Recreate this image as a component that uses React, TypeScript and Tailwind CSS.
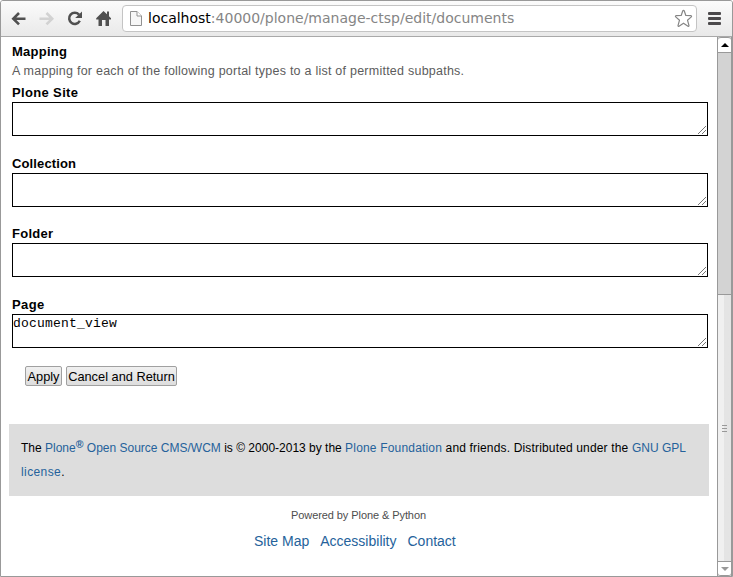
import type { ReactNode } from 'react';

function Field({ label, tracking, value, className }: { label: string; tracking: string; value?: string; className: string }) {
  return (
    <div className={className}>
      <div className={`h-[18px] text-[13px] leading-[18px] font-bold text-black whitespace-nowrap ${tracking}`}>{label}</div>
      <div className="relative h-[34px] w-[696px] border border-black bg-white pt-px">
        <div className="font-['Liberation_Mono','Courier_New',monospace] text-[13px] leading-[15px] tracking-[0.2px] text-black">{value}</div>
        <svg className="absolute right-px bottom-px" width="8" height="8" viewBox="0 0 8 8">
          <path d="M0 8L8 0M4 8L8 4" stroke="#666" strokeWidth="0.9" fill="none" />
        </svg>
      </div>
    </div>
  );
}

function Button({ children, className }: { children: ReactNode; className: string }) {
  return (
    <button className={`h-5 rounded-[2px] border border-[#a0a0a0] bg-linear-to-b from-[#f0f0f0] to-[#dddddd] text-center text-[12.8px] leading-[19px] whitespace-nowrap text-black ${className}`}>
      {children}
    </button>
  );
}

function Link({ children, className = '' }: { children: ReactNode; className?: string }) {
  return <a className={`text-[#25629b] ${className}`}>{children}</a>;
}

function Toolbar() {
  return (
    <div className="flex h-9 shrink-0 items-center border-b border-[#a9a9a9] bg-linear-to-b from-[#fbfbfb] to-[#e9e9e9]">
      <svg width="121" height="35" viewBox="1 1 121 35" fill="none">
        <path d="M25.500 18.700H13.500M19 13L13.300 18.700L19 24.400" stroke="#505050" strokeWidth="2.600" />
        <path d="M39.500 18.700H51.500M46.500 13L52.200 18.700L46.500 24.400" stroke="#d2d2d2" strokeWidth="2.600" />
        <path d="M79 14.600A5.600 5.600 0 1 0 79.800 20.800" stroke="#505050" strokeWidth="2.500" />
        <path d="M82 11.500V18H75.200Z" fill="#505050" />
        <path d="M103.500 11L96.200 18.300V19.500H98.500V26H102V20H105.500V26H109V19.500H111V18.300L109 16.300V11.500H107V14.300Z" fill="#505050" />
      </svg>
      <div className="flex h-[27px] w-[575px] items-center rounded-[4px] border border-[#c4c4c4] bg-white">
        <svg className="ml-[7px]" width="12" height="15" viewBox="0 0 12 15">
          <path d="M.5.5H7L11.500 5V14.500H.5Z" fill="#f7f7f7" stroke="#919191" />
          <path d="M7 .5V5H11.500" fill="#fff" stroke="#919191" />
        </svg>
        <div className="ml-[6px] w-[526px] pb-px font-['DejaVu_Sans',sans-serif] text-[14px] leading-[18px] whitespace-nowrap text-[#858585]">
          <span className="text-black">localhost</span>:40000/plone/manage-ctsp/edit/documents
        </div>
        <svg width="19" height="19" viewBox="0 0 19 19">
          <path d="M9.500 1.300Q10 1.300 10.300 2L11.800 6.500L17 6.700Q18 7 17.300 7.900L13.500 11.200L15 16.600Q15 17.700 14 17.200L9.500 14.200L5 17.200Q4 17.700 4 16.600L5.500 11.200L1.700 7.900Q1 7 2 6.700L7.200 6.500L8.700 2Q9 1.300 9.500 1.300Z" fill="#fff" stroke="#858585" strokeWidth="1.200" strokeLinejoin="round" />
        </svg>
      </div>
      <div className="ml-[11px] flex flex-col gap-[2px]">
        <div className="h-[3px] w-[13px] rounded-[1px] bg-[#4b494b]" />
        <div className="h-[3px] w-[13px] rounded-[1px] bg-[#4b494b]" />
        <div className="h-[3px] w-[13px] rounded-[1px] bg-[#4b494b]" />
      </div>
    </div>
  );
}

function Scrollbar() {
  return (
    <div className="flex w-[15px] shrink-0 flex-col border-x border-[#999] bg-[#d3d3d3]">
      <div className="flex h-[15px] items-center justify-center rounded-t-[3px] border-t border-[#999] bg-white">
        <svg width="8" height="4" viewBox="0 0 8 4"><path d="M4 0L8 4H0Z" fill="#000" /></svg>
      </div>
      <div className="h-[243px] border-y border-[#999]" />
      <div className="flex flex-1 items-center justify-center bg-linear-to-r from-[#f0f0f0] from-50% to-[#e4e4e4] to-50%">
        <div className="flex w-[5px] flex-col gap-[2px]">
          <div className="h-px bg-[#999]" />
          <div className="h-px bg-[#999]" />
          <div className="h-px bg-[#999]" />
        </div>
      </div>
      <div className="flex h-[15px] items-center justify-center rounded-b-[3px] border-y border-[#999] bg-white">
        <svg width="8" height="4" viewBox="0 0 8 4"><path d="M0 0H8L4 4Z" fill="#999" /></svg>
      </div>
    </div>
  );
}

export default function App() {
  return (
    <div className="flex h-[577px] w-[733px] flex-col overflow-hidden rounded-t-[3px] border border-[#999] bg-white font-['Liberation_Sans',Arial,sans-serif]">
      <Toolbar />
      <div className="flex min-h-0 flex-1">
        <div className="flex w-[715px] shrink-0 flex-col">
          <div className="ml-[11px] mt-[6px] h-[18px] text-[13px] leading-[18px] font-bold tracking-[0.25px]">Mapping</div>
          <div className="ml-[11px] h-[20px] text-[12.5px] leading-[20px] tracking-[0.24px] whitespace-nowrap text-[#5c5c5c]">
            <span>A mapping for each of the following portal types to a list of permitted subpaths.</span>
          </div>
          <Field label="Plone Site" tracking="tracking-[0.35px]" className="ml-[11px] mt-[3px]" />
          <Field label="Collection" tracking="tracking-[0.12px]" className="ml-[11px] mt-[19px]" />
          <Field label="Folder" tracking="tracking-[0.25px]" className="ml-[11px] mt-[18px]" />
          <Field label="Page" tracking="tracking-[0.4px]" value="document_view" className="ml-[11px] mt-[19px]" />
          <div className="ml-6 mt-[18px] flex gap-1">
            <Button className="w-[37px]">Apply</Button>
            <Button className="w-[111px]">Cancel and Return</Button>
          </div>
          <div className="ml-2 mt-[38px] h-[72px] w-[700px] bg-[#ddd] pl-3 text-[12px] leading-[24px] whitespace-nowrap text-black">
            <div className="h-6 pt-3">
              <span>The </span>
              <Link>Plone<sup className="-top-[4px] text-[10.5px] font-bold">®</sup> Open Source CMS/WCM</Link>
              <span> is © 2000-2013 by the </span>
              <Link className="tracking-[0.18px]">Plone Foundation</Link>
              <span className="tracking-[0.16px]"> and friends. Distributed under the </span>
              <Link>GNU GPL</Link>
            </div>
            <div className="mt-3 h-6"><Link className="tracking-[0.4px]">license</Link>.</div>
          </div>
          <div className="mt-[11px] text-center text-[11px] leading-[16px] tracking-[-0.08px] text-[#4d4d4d]"><span>Powered by Plone &amp; Python</span></div>
          <div className="ml-[253px] mt-[8px] flex gap-[11px] text-[14px] leading-[20px] whitespace-nowrap">
            <Link>Site Map</Link>
            <Link>Accessibility</Link>
            <Link>Contact</Link>
          </div>
        </div>
        <div className="w-px shrink-0" />
        <Scrollbar />
      </div>
    </div>
  );
}
